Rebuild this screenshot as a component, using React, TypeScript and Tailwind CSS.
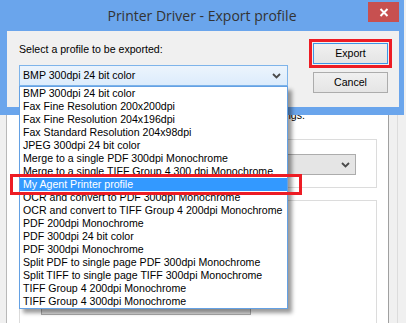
import React from "react";

const items = [
  "BMP 300dpi 24 bit color",
  "Fax Fine Resolution 200x200dpi",
  "Fax Fine Resolution 204x196dpi",
  "Fax Standard Resolution 204x98dpi",
  "JPEG 300dpi 24 bit color",
  "Merge to a single PDF 300dpi Monochrome",
  "Merge to a single TIFF Group 4 300 dpi Monochrome",
  "My Agent Printer profile",
  "OCR and convert to PDF 300dpi Monochrome",
  "OCR and convert to TIFF Group 4 200dpi Monochrome",
  "PDF 200dpi Monochrome",
  "PDF 300dpi 24 bit color",
  "PDF 300dpi Monochrome",
  "Split PDF to single page PDF 300dpi Monochrome",
  "Split TIFF to single page TIFF 300dpi Monochrome",
  "TIFF Group 4 200dpi Monochrome",
  "TIFF Group 4 300dpi Monochrome",
];

function Chevron() {
  return (
    <svg width="9" height="6" viewBox="0 0 9 6">
      <path d="M1 1 L4.5 4.5 L8 1" fill="none" stroke="#4a4a4a" strokeWidth="1.8" />
    </svg>
  );
}

export default function App() {
  return (
    <div className="relative w-[406px] h-[323px] overflow-hidden bg-white flex font-['Liberation_Sans',Arial,sans-serif] text-[10.6px] leading-[13px] text-black">
      {/* background window */}
      <div className="w-[7px] shrink-0 bg-[#f0f0f0] border-r border-[#b9b9b9]" />
      <div className="flex-1 flex flex-col pl-[12px] pr-[11px] pt-[109px]">
        <div className="w-[286px] text-right whitespace-nowrap">
          Profiles store a complete set of driver settings.
        </div>
        <div className="mt-[17px] h-[49px] border border-[#dcdcdc] pt-[14px] pl-[12px] pr-[20px]">
          <div className="h-[21px] bg-[#e5e5e5] border border-[#acacac] flex items-center justify-end pr-[5px]">
            <Chevron />
          </div>
        </div>
        <div className="mt-[12px] flex-1 border border-b-0 border-[#dcdcdc] pt-[91px] pl-[21px]">
          <div className="w-[210px] h-[23px] bg-[#e1e1e1] border border-[#acacac] flex items-center justify-center">
            Export a profile to a file ...
          </div>
        </div>
      </div>
      <div className="w-[18px] shrink-0 border-l border-[#a0a0a0] bg-[#f0f0f0] flex">
        <div className="w-[9px] border-r border-[#dcdcdc]" />
      </div>

      {/* dialog window */}
      <div className="absolute left-0 top-0 w-[404px] h-[115px] bg-[#6aa5ec] flex flex-col">
        <div className="h-[31px] flex items-start">
          <div className="w-[36px]" />
          <div className="flex-1 text-center pt-[6px] leading-[20px] text-[14px] text-[#333333] font-['Open_Sans','Noto_Sans',sans-serif]">
            Printer Driver - Export profile
          </div>
          <div className="mt-[2px] mr-[5px] w-[31px] h-[20px] bg-[#c75050] flex items-center justify-center">
            <svg width="10" height="9" viewBox="0 0 10 9">
              <path d="M1.5 1 L8.5 8 M8.5 1 L1.5 8" stroke="white" strokeWidth="2" />
            </svg>
          </div>
        </div>
        <div className="ml-[7px] mr-[5px] h-[76px] bg-[#f0f0f0] flex">
          <div className="pl-[12px] pt-[12px] flex flex-col">
            <div>Select a profile to be exported:</div>
            <div className="mt-[9px] w-[269px] h-[21px] border border-[#7eb4ea] bg-gradient-to-b from-[#ecf4fc] to-[#dcecfc] flex items-center justify-between pl-[3px] pr-[6px]">
              <span>BMP 300dpi 24 bit color</span>
              <Chevron />
            </div>
          </div>
          <div className="ml-auto mr-[7px] pt-[8px] flex flex-col items-center">
            <div className="border-[3px] border-[#ed1c24] p-[1px]">
              <div className="w-[75px] h-[21px] border border-[#3c95e6] bg-gradient-to-b from-[#f0f0f0] to-[#e5e5e5] flex items-center justify-center">
                Export
              </div>
            </div>
            <div className="mt-[4px] w-[75px] h-[21px] border border-[#acacac] bg-gradient-to-b from-[#f0f0f0] to-[#e5e5e5] flex items-center justify-center">
              Cancel
            </div>
          </div>
        </div>
      </div>

      {/* dropdown list */}
      <div className="absolute left-[19px] top-[86px] w-[269px] bg-white border border-[#64a1e4] shadow-[4px_4px_4px_rgba(0,0,0,0.4)]">
        {items.map((it, i) => (
          <div
            key={it}
            className={
              i === 7
                ? "h-[13px] px-[3px] whitespace-nowrap bg-[#3399ff] text-white"
                : "h-[13px] px-[3px] whitespace-nowrap"
            }
          >
            {it}
          </div>
        ))}
      </div>

      {/* red highlight frame */}
      <div className="absolute left-[10px] top-[174px] w-[292px] h-[21px] border-[3px] border-[#ed1c24]" />
    </div>
  );
}
